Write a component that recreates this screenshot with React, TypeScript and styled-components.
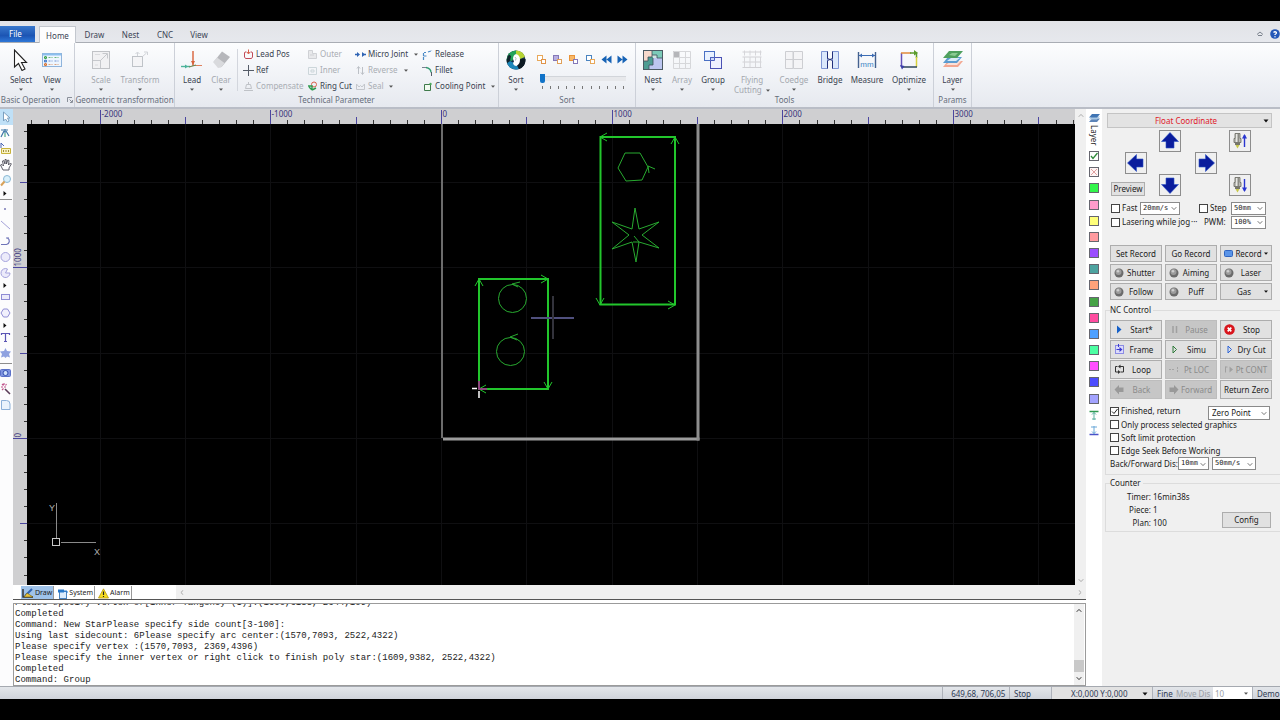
import React from "react";
import styled, { createGlobalStyle, css } from "styled-components";

const UI = `"Noto Sans", "Open Sans", sans-serif`;
const MONO = `"Liberation Mono", "Courier New", monospace`;

const Global = createGlobalStyle`
  * { box-sizing: border-box; }
  html, body, #root { height: 100%; }
  body { margin: 0; background: #000; font: 8px/12px ${UI}; color: #1c1c1c; overflow: hidden; }
  button, input, select { font: inherit; color: inherit; margin: 0; padding: 0; }
  svg { display: block; flex: none; }
`;

/* ---------- shell ---------- */

const Shell = styled.div`
  display: flex;
  flex-direction: column;
  height: 100vh;
  min-height: 600px;
  padding: 21px 0;
`;

const TabBar = styled.nav`
  display: flex;
  align-items: flex-end;
  height: 22px;
  flex: none;
  background: linear-gradient(#e2e3e7, #e6e8ed);
  border-bottom: 1px solid #a9adb4;
`;

const FileButton = styled.button`
  width: 35px;
  height: 16px;
  margin-right: 4px;
  padding-right: 4px;
  border: 0;
  background: linear-gradient(#3a78cc, #1c55b4 60%, #2e78d8);
  color: #fff;
`;

const Tab = styled.button<{ $w: number; $on?: boolean }>`
  width: ${(p) => p.$w}px;
  height: 14px;
  border: 0;
  background: transparent;
  color: #3b4454;
  ${(p) =>
    p.$on &&
    css`
      height: 17px;
      margin-bottom: -1px;
      padding-top: 1px;
      background: #fdfdfe;
      border: 1px solid #c3c7ce;
      border-bottom: 0;
    `}
`;

const TabBarEnd = styled.div`
  display: flex;
  align-items: center;
  gap: 6px;
  height: 17px;
  margin-left: auto;
`;

const Ribbon = styled.div`
  display: flex;
  flex: none;
  height: 66px;
  background: linear-gradient(#fcfdfe, #f1f3f7 50%, #e6e9ef);
  border-bottom: 2px solid #b9bdc6;
`;

const Group = styled.section<{ $w: number }>`
  display: flex;
  flex-direction: column;
  flex: none;
  width: ${(p) => p.$w}px;
  padding-bottom: 1px;
  border-right: 1px solid #ccd0d8;
`;

const GroupBody = styled.div<{ $pad?: number }>`
  display: flex;
  flex: 1;
  min-height: 0;
  padding: 3px 0 0 ${(p) => p.$pad ?? 0}px;
`;

const GroupName = styled.div`
  display: flex;
  flex: none;
  align-items: center;
  justify-content: center;
  gap: 7px;
  height: 12px;
  color: #666e7b;
  white-space: nowrap;
`;

const BigButton = styled.button<{ $w: number }>`
  display: flex;
  flex-direction: column;
  align-items: center;
  justify-content: flex-start;
  flex: none;
  width: ${(p) => p.$w}px;
  height: 48px;
  padding-top: 3px;
  border: 0;
  background: none;
  color: #39424f;
  line-height: 10px;
  white-space: nowrap;
  &:disabled {
    color: #a3a7ae;
  }
  span {
    margin-top: 4px;
  }
`;

const DropGap = styled.i`
  padding-top: 3px;
`;

const Divider = styled.i`
  width: 1px;
  height: 42px;
  margin: 3px 5px 0 1px;
  background: #d3d6dd;
`;

const ToolGrid = styled.div`
  display: grid;
  grid-template-columns: 64px 48px 67px 74px;
  grid-auto-rows: 16px;
`;

const SmallButton = styled.button`
  display: flex;
  align-items: center;
  gap: 2px;
  border: 0;
  background: none;
  color: #39424f;
  white-space: nowrap;
  text-align: left;
  &:disabled {
    color: #a9adb3;
  }
  em {
    padding-left: 4px;
  }
`;

const SortTools = styled.div`
  display: flex;
  flex-direction: column;
  width: 98px;
  padding: 7px 0 0 5px;
`;

const SortIcons = styled.div`
  display: flex;
  justify-content: space-between;
  width: 92px;
  height: 21px;
  button {
    border: 0;
    background: none;
    height: 12px;
  }
`;

const Slider = styled.input`
  appearance: none;
  width: 86px;
  height: 9px;
  margin-left: 4px !important;
  background: linear-gradient(#d2d5da, #d2d5da) 0 2px / 100% 1px no-repeat, linear-gradient(#e7e8eb, #e7e8eb) 0 2px / 100%
    5px no-repeat;
  &::-webkit-slider-thumb {
    appearance: none;
    width: 5px;
    height: 9px;
    background: #1173c8;
    border-radius: 0 0 2px 2px;
  }
`;

const Ticks = styled.div`
  display: flex;
  justify-content: space-between;
  width: 82px;
  margin: 3px 0 0 6px;
  i {
    width: 1px;
    height: 3px;
    background: #777;
  }
`;

/* ---------- work area ---------- */

const Work = styled.div`
  display: flex;
  flex: 1;
  min-height: 0;
  background: #fff;
`;

const Toolbox = styled.div`
  display: flex;
  flex-direction: column;
  flex: none;
  width: 13px;
  background: #fcfcfd;
`;

const Tool = styled.button<{ $on?: boolean }>`
  display: flex;
  align-items: center;
  height: 16px;
  border: 0;
  background: ${(p) => (p.$on ? "#bfe0f7" : "none")};
`;

const More = styled.button`
  display: flex;
  align-items: center;
  height: 8px;
  padding-left: 3px !important;
  border: 0;
  background: none;
`;

const Rule = styled.i`
  height: 1px;
  margin: 2px 1px 1px 0;
  background: #8d8d8d;
`;

const Center = styled.div`
  display: flex;
  flex-direction: column;
  flex: 1;
  min-width: 0;
`;

const Stage = styled.div`
  display: grid;
  grid-template-columns: 14px 1fr 11px;
  grid-template-rows: 15px 1fr;
  flex: 1;
  min-height: 0;
  background: #cfcfd1;
  > svg {
    width: 100%;
    height: 100%;
    min-height: 0;
  }
`;

const StageScroll = styled.div`
  display: flex;
  flex-direction: column;
  justify-content: space-between;
  align-items: center;
  grid-column: 3;
  grid-row: 1 / 3;
  padding: 4px 0 2px;
  background: #f0f0f0;
`;

const SheetTabs = styled.div`
  display: flex;
  flex: none;
  height: 15px;
  border-bottom: 1px solid #555;
  padding-left: 8px;
`;

const SheetTab = styled.button<{ $on?: boolean }>`
  display: flex;
  align-items: center;
  gap: 1px;
  height: 13px;
  margin: 1px 2px 0 0;
  padding: 1px 1px 0 1px;
  border: 0;
  border-right: 1px solid #999;
  background: ${(p) => (p.$on ? "#9fc3ea" : "none")};
  font: 7px/12px ${UI};
`;

const SheetScroll = styled.div`
  display: flex;
  align-items: center;
  justify-content: space-between;
  flex: 1;
  margin-left: 42px;
  padding: 0 3px;
  background: #f0f0f0;
`;

const LogBox = styled.div`
  display: flex;
  flex: none;
  height: 83px;
  margin-top: 3px;
  border: 1px solid #9b9b9b;
  background: #fff;
`;

const LogLines = styled.div`
  display: flex;
  flex-direction: column;
  flex: 1;
  min-width: 0;
  overflow: hidden;
  padding-left: 1px;
  font: 9px/11px ${MONO};
  color: #222;
  white-space: pre;
  > :first-child {
    margin-top: -6px;
  }
`;

const LogScroll = styled.div`
  display: flex;
  flex-direction: column;
  align-items: center;
  justify-content: space-between;
  width: 10px;
  padding: 4px 0;
  margin-right: 1px;
  background: #f0f0f0;
`;

const Thumb = styled.i`
  width: 10px;
  height: 12px;
  margin: auto 0 4px;
  background: #c9c9c9;
`;

const LayerStrip = styled.div`
  display: flex;
  flex-direction: column;
  align-items: center;
  flex: none;
  width: 16px;
  padding-top: 4px;
  background: #fff;
`;

const LayerName = styled.div`
  width: 10px;
  height: 28px;
  padding-top: 2px;
  writing-mode: vertical-rl;
  line-height: 10px;
`;

const Swatches = styled.div`
  display: flex;
  flex-direction: column;
  justify-content: space-between;
  height: 285px;
`;

const Swatch = styled.button<{ $c: string }>`
  display: flex;
  width: 10px;
  height: 10px;
  border: 1px solid #66666f;
  background: ${(p) => p.$c};
`;

/* ---------- control panel ---------- */

const Panel = styled.aside`
  flex: none;
  width: 178px;
  padding: 4px 0 0 3px;
  background: #f0f0f0;
`;

const Pick = styled.span<{ $w: number; $h?: number; $flat?: boolean }>`
  position: relative;
  display: flex;
  flex: none;
  width: ${(p) => p.$w}px;
  height: ${(p) => p.$h ?? 13}px;
  select {
    appearance: none;
    width: 100%;
    height: 100%;
    padding: 0 10px 0 3px;
    border: 1px solid ${(p) => (p.$flat ? "#c4c4c4" : "#8a8a8a")};
    border-radius: 0;
    background: ${(p) => (p.$flat ? "#e3e3e3" : "#fff")};
    line-height: 12px;
  }
  svg {
    position: absolute;
    right: 3px;
    top: 50%;
    margin-top: -2px;
    pointer-events: none;
  }
`;

const MonoPick = styled(Pick)`
  select {
    font: 7px/11px "DejaVu Sans Mono", ${MONO};
    padding-left: 2px;
    padding-right: 0;
  }
`;

const CoordPick = styled(Pick)`
  margin-left: 2px;
  select {
    color: #e0202a;
    text-align: center;
    text-align-last: center;
  }
`;

const Jog = styled.div`
  display: grid;
  grid-template-columns: 14px 22px 12px 22px 14px 22px 12px 22px;
  grid-template-rows: repeat(3, 22px);
  margin: 2px 0 5px 6px;
`;

const JogKey = styled.button<{ $col: number; $row: number }>`
  grid-column: ${(p) => p.$col};
  grid-row: ${(p) => p.$row};
  display: flex;
  align-items: center;
  justify-content: center;
  border: 1px solid #8d8d8d;
  background: #f0f0f0;
`;

const Push = styled.button`
  display: flex;
  align-items: center;
  border: 1px solid #adadad;
  background: #e1e1e1;
  padding: 0 3px;
  color: #222;
  white-space: nowrap;
  span {
    flex: 1;
    text-align: center;
  }
  &:disabled {
    background: #c6c6c6;
    border-color: #bdbdbd;
    color: #8b8b8b;
  }
`;

const Preview = styled(Push)`
  grid-column: 1 / 3;
  grid-row: 3;
  align-self: end;
  width: 34px;
  height: 14px;
  padding: 0;
`;

const Line = styled.div<{ $h?: number; $pad?: number }>`
  display: flex;
  align-items: center;
  height: ${(p) => p.$h ?? 13}px;
  padding-left: ${(p) => p.$pad ?? 0}px;
  white-space: nowrap;
`;

const Cell = styled.div<{ $w?: number }>`
  display: flex;
  align-items: center;
  width: ${(p) => (p.$w ? `${p.$w}px` : "auto")};
`;

const Check = styled.label`
  display: flex;
  align-items: center;
  gap: 2px;
  input {
    appearance: none;
    width: 9px;
    height: 9px;
    border: 1px solid #444;
    background: #fff;
  }
  svg {
    position: absolute;
    margin-left: 1px;
    pointer-events: none;
  }
`;

const KeyGrid = styled.div<{ $row: number; $gap: number }>`
  display: grid;
  grid-template-columns: repeat(3, 52px);
  grid-auto-rows: ${(p) => p.$row}px;
  gap: ${(p) => p.$gap}px 3px;
`;

const Box = styled.fieldset`
  margin: 0;
  padding: 0 0 0 4px;
  border: 1px solid #dcdcdc;
  border-right: 0;
  min-width: 0;
  legend {
    padding: 0 2px 0 0;
    line-height: 12px;
  }
`;

const CounterBody = styled.div`
  display: flex;
  align-items: center;
  height: 42px;
`;

const Counts = styled.dl`
  display: grid;
  grid-template-columns: 41px 69px;
  grid-auto-rows: 13px;
  column-gap: 2px;
  margin: 0;
  dt {
    text-align: right;
  }
  dd {
    margin: 0;
  }
`;

const Gap = styled.div<{ $h: number }>`
  height: ${(p) => p.$h}px;
`;

const Records = styled.div`
  padding: 16px 0 4px 5px;
`;

const ZeroRow = styled.div`
  display: flex;
  align-items: flex-start;
  justify-content: space-between;
  height: 13px;
  padding-right: 10px;
  > :last-child {
    margin-top: 1px;
  }
`;

const Options = styled.div`
  padding: 6px 0 4px;
`;

const Config = styled(Push)`
  align-self: flex-end;
  width: 49px;
  height: 16px;
  margin-bottom: 3px;
`;

const NcKeys = styled.div`
  padding-top: 4px;
`;

/* ---------- status bar ---------- */

const Status = styled.footer`
  display: flex;
  align-items: stretch;
  justify-content: flex-end;
  flex: none;
  height: 13px;
  overflow: hidden;
  border-top: 1px solid #a5a9b0;
  background: linear-gradient(#e3e6ea, #cfd3da);
  white-space: nowrap;
`;

const StatusCell = styled.span<{ $w: number; $dim?: boolean; $box?: string }>`
  display: flex;
  align-items: center;
  width: ${(p) => p.$w}px;
  padding: 1px 0 0 ${(p) => (p.$dim ? 1 : 4)}px;
  color: ${(p) => (p.$dim ? "#9a9ea6" : "#2f3b55")};
  background: ${(p) => p.$box ?? "none"};
  border-left: 1px solid ${(p) => (p.$dim || p.$box === "#fff" ? "transparent" : "#aeb2ba")};
  svg {
    margin: 0 4px 0 auto;
  }
`;

/* ---------- icons ---------- */

const Caret = ({ c = "#555" }: { c?: string }) => (
  <svg width="4" height="3" viewBox="0 0 4 3">
    <path d="M0 0.500h4L2 2.800z" fill={c} />
  </svg>
);
const BlackCaret = () => (
  <svg width="6" height="4" viewBox="0 0 6 4">
    <path d="M0.500 0.500h5L3 3.500z" fill="#111" />
  </svg>
);
const Chevron = ({ turn = 0, c = "#777" }: { turn?: number; c?: string }) => (
  <svg width="6" height="5" viewBox="0 0 6 5">
    <path d="M0.7 1.2 3 3.6 5.3 1.2" fill="none" stroke={c} transform={`rotate(${turn} 3 2.5)`} />
  </svg>
);

const Svg = ({ s = 22, h, children }: { s?: number; h?: number; children: React.ReactNode }) => (
  <svg width={s} height={h ?? s} viewBox={`0 0 ${s} ${h ?? s}`} fill="none">
    {children}
  </svg>
);

const big = {
  select: (
    <Svg>
      <path d="M4.500 1v17l4-3.500 3.500 7 3-1.500-3.500-6.500h5z" fill="#fff" stroke="#222" strokeWidth="1.100" />
    </Svg>
  ),
  view: (
    <Svg>
      <rect x="1.500" y="4.500" width="19" height="13" fill="#eef6ff" stroke="#8fb4dc" />
      <path d="M2 5.500h18" stroke="#8cc0ee" strokeWidth="2" />
      <g strokeWidth="1.200">
        <circle cx="4.500" cy="8.500" r="1" stroke="#35a048" />
        <circle cx="4.500" cy="12" r="1" stroke="#3f77c8" />
        <circle cx="4.500" cy="15.500" r="1" stroke="#d8702d" />
      </g>
      <path d="M7.500 8.500h4M13.500 8.500h4" stroke="#6cb87a" strokeDasharray="2 1" />
      <path d="M7.500 12h4M13.500 12h4" stroke="#6b8fd0" strokeDasharray="2 1" />
      <path d="M7.500 15.500h4M13.500 15.500h4" stroke="#dba27e" strokeDasharray="2 1" />
    </Svg>
  ),
  scale: (
    <Svg>
      <rect x="2.500" y="2.500" width="17" height="17" fill="#f1f1f3" stroke="#c0c2c6" />
      <path d="M3 11.500h7.500v7.500M10 12l7-7M12.500 4.500h5v5" stroke="#c6c8cc" />
      <path d="M5 5.500h5M5 16h3" stroke="#dadbde" />
    </Svg>
  ),
  transform: (
    <Svg>
      <rect x="3.500" y="7.500" width="10" height="10" fill="#f4f4f6" stroke="#bfc3c8" />
      <path d="M8.500 7V3.500M6.500 5l2-2 2 2M13.500 7.500l4-3.500M15 3h3.500v3" stroke="#d0d3d8" />
    </Svg>
  ),
  lead: (
    <Svg>
      <path d="M12 2v15" stroke="#d8613a" strokeWidth="1.400" />
      <path d="M10 12l2 4 2-4z" fill="#d8613a" />
      <path d="M0 17.500h9" stroke="#4cb39a" strokeWidth="1.400" />
      <path d="M4 15.500v4l3-2z" fill="#4cb39a" />
      <path d="M12 16.500h9" stroke="#e0815e" />
      <path d="M8 18l7-2" stroke="#6b8a55" strokeWidth="1.200" />
    </Svg>
  ),
  clear: (
    <Svg>
      <path d="M12 2.500 20 8l-8.500 10-7.500-5.500z" fill="#b6b7bb" />
      <path d="M3 13 7 8.500l7.500 5.500-3.500 4.500-3 .5z" fill="#d9dadd" />
    </Svg>
  ),
  sort: (
    <Svg>
      <circle cx="11" cy="11" r="9.500" fill="#16304a" />
      <path d="M11 1.500A9.500 9.500 0 0 0 1.500 11L7 12 12 3z" fill="#22a35a" />
      <path d="M11 1.500A9.500 9.500 0 0 1 20 8l-5 2-4-5z" fill="#b6d433" />
      <path d="M2 14a9.500 9.500 0 0 0 12 6l-3-5-6-3z" fill="#1d86b8" />
      <path d="M20.500 10a9.500 9.500 0 0 1-6.500 10l-2-5 4-5z" fill="#0d1a22" />
      <path d="M4 5.500A9.500 9.500 0 0 0 2 14l3-2 1-5z" fill="#10242c" />
      <path d="M11 5q4 1 4 5.500T11.500 17q-3 0-3.500-3l1-1.500L8 10q0-4 3-5z" fill="#fff" />
      <path d="M10 8l1 1.500-.5 2" stroke="#7a8f9a" strokeWidth="0.600" />
    </Svg>
  ),
  nest: (
    <Svg>
      <rect x="1.500" y="1.500" width="19" height="19" fill="#cfe6e2" stroke="#4b5a63" />
      <path d="M2 2h8v6H6v4H2z" fill="#f6d9cb" />
      <path d="M10 2h10v7h-5V6h-5z" fill="#7ccab8" />
      <path d="M2 12h4V8h5v8H7v4H2z" fill="#4d9c92" />
      <path d="M11 9h9v11H7v-4h4z" fill="#bcc6f0" />
      <path d="M10 2v6H6v4H2M10 6h5v3h5M11 9v7H7v4" stroke="#3c4c58" strokeWidth="0.800" />
    </Svg>
  ),
  array: (
    <Svg>
      <rect x="2" y="2" width="6" height="6" fill="#b5b6ba" />
      <path d="M2.500 2.500h17v17h-17zM8.500 2.500v17M14.500 2.500v17M2.500 8.500h17M2.500 14.500h17" stroke="#d6d7da" />
    </Svg>
  ),
  group: (
    <Svg>
      <rect x="2.500" y="2.500" width="10" height="9" fill="#e8f1ff" stroke="#4a70c4" />
      <rect x="8.500" y="8.500" width="11" height="11" fill="#eef1ff" stroke="#4a52b4" />
      <path d="M8.500 8.500h4v3h-4z" fill="#cdd9fb" stroke="#4a60bc" />
    </Svg>
  ),
  flying: (
    <Svg>
      <path d="M1.500 3h19M1.500 8h19M1.500 13h19M1.500 18.500h19" stroke="#d0d0d4" />
      <path d="M3.500 1.500v5M9 1.500v5M14.500 1.500v5M19.500 1.500v5M3.500 8v10M9 8v10M14.500 8v10M19.500 8v10" stroke="#d6d6da" />
    </Svg>
  ),
  coedge: (
    <Svg>
      <path d="M2.500 2.500h7.500v17H2.500zM2.500 10.500h8M10.500 2.500h9v8h-9zM10.500 10.500h9v9h-9z" stroke="#cdced2" fill="#f4f4f6" />
    </Svg>
  ),
  bridge: (
    <Svg>
      <path d="M2.500 2.500h6v17h-6zM13.500 2.500h6v17h-6z" fill="#dbe8fb" stroke="#7f96d4" />
      <path d="M8.500 2.500v7l5 2M13.500 2.500v7l-5 2M8.500 12v7.500M13.500 12v7.500" stroke="#22307a" />
    </Svg>
  ),
  measure: (
    <Svg>
      <path d="M2.500 3v16M19.500 3v16" stroke="#44618f" strokeWidth="1.400" />
      <path d="M3 6.500h16" stroke="#3c6cb4" />
      <path d="M3 6.500l3-2v4zM19 6.500l-3-2v4z" fill="#3c6cb4" />
      <text x="11" y="17.500" textAnchor="middle" fontSize="8" fontFamily="Liberation Sans" fill="#3e86c6">
        mm
      </text>
    </Svg>
  ),
  optimize: (
    <Svg>
      <path d="M3.500 4v14" stroke="#6450b8" strokeWidth="1.500" />
      <path d="M3 4h10" stroke="#e08a3a" strokeWidth="1.500" />
      <path d="M12 4h6.500v5" stroke="#5b9c2e" strokeWidth="1.500" />
      <path d="M18.500 8v10" stroke="#d8d23c" strokeWidth="1.500" />
      <path d="M4 18h15" stroke="#2d4358" strokeWidth="1.500" />
      <path d="M16 1l4 3-4 2.500z" fill="#5b9c2e" />
      <path d="M2 16l2 4.500L6.500 17z" fill="#3b3fa8" />
    </Svg>
  ),
  layer: (
    <Svg>
      <path d="M6 12h15l-5 6H1z" fill="#f2a791" />
      <path d="M4 16l5-4h10l-4 4z" fill="#fbe0d8" />
      <path d="M6 8h14l-5 6H1z" fill="#5c9cd0" />
      <path d="M5 12l4-3h9l-4 3z" fill="#d9ecf8" />
      <path d="M7 2h14l-6 7H1z" fill="#4fa05e" />
      <path d="M7 6l3-2h6l-3 3z" fill="#8ccb93" />
    </Svg>
  ),
};

const S = ({ children }: { children: React.ReactNode }) => <Svg s={11}>{children}</Svg>;
const small = {
  leadPos: <S><path d="M3.500 3h-1.500l-.5 1v4l1 1.500h6l1-1.500V4l-.5-1H7.500" stroke="#c04a58" /><path d="M5.500 0.500v4M4 3l1.500 2L7 3" stroke="#d8604a" /></S>,
  ref: <S><path d="M5.500 0v11M0 5.500h11" stroke="#555c68" /></S>,
  comp: <S><path d="M1 9.500h9M2.500 7.500l1-4h4l1 4zM5.500 1v2" stroke="#bfc2c7" /></S>,
  outer: <S><path d="M1.500 1.500h4v3h4v5h-8zM3 6h4" stroke="#cfd1d5" fill="#e8e9eb" /></S>,
  inner: <S><path d="M1.500 2.500h8v7h-8zM4 5h3v2H4z" stroke="#ccd6da" /></S>,
  ring: <S><circle cx="7" cy="3.500" r="2.500" stroke="#d8604a" /><path d="M1 5h4v4M5 9l-3-3M5 9l4-2" stroke="#2f9a50" strokeWidth="1.400" /></S>,
  micro: <S><path d="M0 5.500h3M8 5.500h3" stroke="#2f64b4" strokeWidth="1.600" /><path d="M2 3l3 2.500L2 8zM7 3l3 2.500L7 8z" fill="#2f64b4" /></S>,
  reverse: <S><path d="M3.500 9V2M2 3.500 3.500 1.500 5 3.500M7.500 2v7M6 7.500 7.500 9.500 9 7.500" stroke="#bcc0c6" /></S>,
  seal: <S><path d="M1.500 3v5.500h8V3L7 6 5.500 4.500 4 6z" stroke="#c4c7cc" /></S>,
  release: <S><path d="M1.500 11V3.500H4M1.500 7h3M6 3l4-1.500" stroke="#4b8ac6" strokeWidth="1.200" strokeDasharray="3 1" /></S>,
  fillet: <S><path d="M0 2.500h4" stroke="#7a8290" /><path d="M4 2.500q5 1 5 5" stroke="#2f9a70" strokeWidth="1.300" /><path d="M9.500 7v4" stroke="#555c68" /></S>,
  cooling: <S><path d="M2.500 3.500h6v6h-6z" stroke="#3f7a4a" fill="#f1faf0" /><circle cx="8.500" cy="3" r="1.200" fill="#4aa85a" /></S>,
};

const Pair = ({ a, b, fa = "#fff", fb = "#fff" }: { a: string; b: string; fa?: string; fb?: string }) => (
  <Svg s={11}>
    <rect x="1.500" y="1.500" width="5" height="5" fill={fa} stroke={a} />
    <rect x="5.500" y="5.500" width="4" height="4" fill={fb} stroke={b} />
  </Svg>
);
const Skip = ({ back }: { back?: boolean }) => (
  <Svg s={11}>
    <path d={back ? "M5.500 1.500v8L0.500 5.500zM10.500 1.500v8L5.500 5.500z" : "M0.500 1.500v8l5-4zM5.500 1.500v8l5-4z"} fill="#1763b5" />
  </Svg>
);

const T = ({ children }: { children: React.ReactNode }) => <Svg s={12} h={14}>{children}</Svg>;
const tool = {
  pick: <T><path d="M3.500 2v9l2-2 2 3 1.500-1-1.500-3h2.500z" fill="#fff" stroke="#7ba0c0" /></T>,
  node: <T><path d="M1 4h7M5 3v4M4 5L1 11M6 5l3 5" stroke="#3f78a8" strokeWidth="1.200" /><path d="M5 7v4" stroke="#2f9a70" /></T>,
  size: <T><path d="M1 1l3 3M1 1v5" stroke="#4b64b4" /><path d="M1.500 6.500h9v5h-9z" stroke="#c8b23c" fill="#fbf4c4" /><path d="M3.500 8v2M6 8v2M8.500 8v2" stroke="#9a8a3a" /></T>,
  hand: <T><path d="M3 12 0.500 7l1.500-.5L3.500 8 2.500 3l1.200-.5L5 6V1.500h1.200L6.500 6l1.300-4 1.200.5L8.500 7l2-2 .8 1L9 10v2z" fill="#fff" stroke="#4d4d58" strokeWidth="0.900" /></T>,
  zoom: <T><circle cx="7" cy="5" r="3.500" fill="#d9f0fb" stroke="#8ab8d4" /><path d="M4.500 7.500L1 11.500" stroke="#d8a25a" strokeWidth="2" /></T>,
  dot: <T><rect x="4" y="6" width="2" height="2" fill="#9a9ac8" /></T>,
  line: <T><path d="M1 3l9 8" stroke="#a4a2d8" /></T>,
  arc: <T><path d="M1 10.500h5.500a3.500 3.500 0 0 0 1-6.500" stroke="#6f74b8" strokeWidth="1.200" /><path d="M6 4h3" stroke="#6f74b8" /></T>,
  circle: <T><circle cx="5.500" cy="7" r="4.500" stroke="#a4a2dc" fill="#ecebfa" /></T>,
  pie: <T><path d="M5.500 7h4.500A4.500 4.500 0 1 1 7.500 3z" stroke="#a4a2dc" fill="#ecebfa" /></T>,
  rect: <T><rect x="1.500" y="4.500" width="8" height="5" stroke="#8f8cd4" fill="#ecebfa" /></T>,
  poly: <T><path d="M3.500 3h4l2.500 4-2.500 4h-4L1 7z" stroke="#8f8cd4" fill="#f1f0fc" /></T>,
  text: <T><path d="M1.500 5V3.500h8V5M5.500 3.500v7.500M4 11.500h3" stroke="#5a55b4" strokeWidth="1.200" /></T>,
  star: <T><path d="M5.500 2 7 5l4 .5L9 8l1 3.500-3-1-1.500 1.500-1.500-1.500-3 1L2 8 0 5.500 4 5z" fill="#8fa2e0" /></T>,
  cam: <T><rect x="0.500" y="3.500" width="10" height="7" rx="1" fill="#7f94e0" stroke="#5a70c8" /><circle cx="5.500" cy="7" r="2.500" fill="#cfe0fb" stroke="#3450b0" /></T>,
  wand: <T><path d="M5 7l5 5" stroke="#5a3c58" strokeWidth="1.600" /><path d="M4 1v2M1 5h2M2 2l1.500 1.500M6.500 2L5.500 3.500M2 8l1.500-1.500M4 5h2" stroke="#c0508a" strokeWidth="1.100" /></T>,
  sheet: <T><path d="M1.500 2.500h5a3.500 3.500 0 0 1 3.500 3.500v5.500H1.500z" fill="#eaf3fc" stroke="#8cb0d8" /></T>,
};

const JogArrow = ({ turn }: { turn: number }) => (
  <Svg s={18}>
    <path d="M9 0.500 17.500 9.500H13v6.500H5V9.500H0.500z" fill="#0a1c9c" stroke="#2c55c8" strokeWidth="0.600" transform={`rotate(${turn} 9 9)`} />
  </Svg>
);
const HeadIcon = ({ down }: { down?: boolean }) => (
  <Svg s={16}>
    <path d="M3 0.500h5v5h1v4H2v-4h1z" fill="#b9b9b4" stroke="#66665e" strokeWidth="0.800" />
    <path d="M4.500 1v8" stroke="#e8e8e4" />
    <path d="M6.500 1v8" stroke="#8a8a84" />
    <path d="M3 9.500h5v2.500H3z" fill="#77776c" />
    <path d="M3.500 12h4L5.500 15.500z" fill="#c8c84a" />
    <path d="M12.500 2v12" stroke="#2a36d0" strokeWidth="1.400" />
    <path d={down ? "M10 10.500h5L12.500 15z" : "M10 5.500h5L12.500 1z"} fill="#2a36d0" />
  </Svg>
);
const Lamp = () => (
  <Svg s={10}>
    <circle cx="5" cy="5" r="4.500" fill="#6b6b6b" />
    <circle cx="4.500" cy="4" r="3" fill="#9c9c9c" />
    <circle cx="4" cy="3.300" r="1.300" fill="#cfcfcf" />
  </Svg>
);
const K = ({ children }: { children: React.ReactNode }) => <Svg s={11}>{children}</Svg>;
const key = {
  start: <K><path d="M3 1.500v8l4.500-4z" fill="#1560c8" /></K>,
  pause: <K><path d="M4 2v7M7.500 2v7" stroke="#a0a0a0" strokeWidth="1.500" /></K>,
  stop: <K><circle cx="5.500" cy="5.500" r="5.300" fill="#d8141c" /><path d="M3.700 3.700l3.600 3.600M7.300 3.700L3.700 7.300" stroke="#fff" strokeWidth="1.700" /></K>,
  frame: <K><rect x="1.500" y="1.500" width="8" height="8" stroke="#8c8ce4" fill="#dcdcfa" /><path d="M2.500 5h3v-2l3 2.500-3 2.500v-2h-3z" fill="#3a3ad0" /><path d="M4.500 0v3" stroke="#3a3ad0" /></K>,
  simu: <K><path d="M4 2v7l3.500-3.500z" stroke="#2f7a3a" /></K>,
  dry: <K><path d="M4 2v7l3.500-3.500z" stroke="#2a62d8" /></K>,
  loop: <K><path d="M3.500 2.500h-2v5.500H4M6.500 8h3V2.500H6" stroke="#333" /><path d="M6.500 0.500L4 2.500l2.500 2zM4 6l2.500 2L4 10z" fill="#333" /></K>,
  loc: <K><path d="M0 5.500h6M8.500 3v5.500" stroke="#a4a4a4" strokeDasharray="2 1" /></K>,
  cont: <K><path d="M1.500 2.500v6M1.500 3h2" stroke="#a0a0a0" /><path d="M5.500 2.500v6L9 5.500z" fill="#a0a0a0" /></K>,
  back: <K><path d="M5 1v2.500h4.500v4.500H5v2.500L0.500 5.500z" fill="#999" /></K>,
  fwd: <K><path d="M5 1v2.500H0.500v4.500H5v2.500L9.500 5.500z" fill="#999" /></K>,
};

/* ---------- rulers and drawing ---------- */

const STEP = 17.07;
const MAJOR = "#4b46a0";

const TopRuler = () => {
  const marks = Array.from({ length: 72 }, (_, i) => i - 24);
  return (
    <svg>
      {marks.map((n) => {
        const x = Math.round(415 + n * STEP) - 0.5;
        const major = n % 10 === 0;
        const mid = !major && n % 5 === 0;
        return (
          <g key={n}>
            <path d={`M${x} ${major ? 1 : mid ? 8 : 11}V15`} stroke={major || mid ? MAJOR : "#333"} />
            {major && (
              <text x={x + 1} y="8" fontSize="8" fontFamily="Noto Sans" fill="#38347c">
                {n * 100}
              </text>
            )}
          </g>
        );
      })}
    </svg>
  );
};

const SideRuler = () => {
  const marks = Array.from({ length: 30 }, (_, i) => i - 9);
  return (
    <svg>
      {marks.map((n) => {
        const y = Math.round(314 - n * STEP) + 0.5;
        const major = n % 10 === 0;
        const mid = !major && n % 5 === 0;
        return (
          <g key={n}>
            <path d={`M${major ? 0 : mid ? 7 : 11} ${y}H14`} stroke={major || mid ? MAJOR : "#333"} />
            {major && (
              <text transform={`translate(8 ${y - 1}) rotate(-90)`} fontSize="8" fontFamily="Noto Sans" fill="#38347c">
                {n * 100}
              </text>
            )}
          </g>
        );
      })}
    </svg>
  );
};

const head = (x: number, y: number, turn: number) => (
  <path key={`${x} ${y}`} d="M7 -4L0 0L7 4" transform={`translate(${x} ${y}) rotate(${turn})`} strokeWidth="1" />
);

const Drawing = () => (
  <svg>
    <rect width="100%" height="100%" fill="#000" />
    <g stroke="#0f0f11">
      {Array.from({ length: 13 }, (_, i) => Math.round(415 + (i - 4) * STEP * 5) - 0.5).map((x) => (
        <line key={x} x1={x} x2={x} y1="0" y2="100%" />
      ))}
      {Array.from({ length: 6 }, (_, i) => Math.round(314 + (i - 3) * STEP * 5) + 0.5).map((y) => (
        <line key={y} y1={y} y2={y} x1="0" x2="100%" />
      ))}
    </g>
    <g transform="translate(415 314)" fill="none">
      <path d="M0 -314V0" stroke="#6c6c6c" strokeWidth="2" />
      <path d="M1 1H257.500" stroke="#9c9c9c" strokeWidth="3" />
      <path d="M256 -314V2.500" stroke="#8e8e8e" strokeWidth="3" />
      <g stroke="#22c62c" strokeWidth="2">
        <path d="M158.500 -301H233V-133.500H158.500Z" />
        <rect x="37" y="-159" width="69" height="110" />
        {head(158, -301, 0)}
        {head(233, -301, 90)}
        {head(233, -133, 180)}
        {head(158, -133, 270)}
        {head(37, -159, 90)}
        {head(106, -159, 180)}
        {head(106, -49, 270)}
        {head(37, -49, 0)}
      </g>
      <g stroke="#28aa30" strokeWidth="1">
        <circle cx="70.500" cy="-139.500" r="14" />
        <circle cx="68.500" cy="-86.500" r="14" />
        <path d="M78 -156L70 -154L76 -151M76 -104L68 -101L75 -98" />
        <path d="M176 -270L183 -285H198L206 -271L200 -258L184 -257Z" />
        <path d="M213 -269L206 -272L207 -265" />
        <path d="M193 -230L197 -209L217 -216L200 -203L217 -190L197 -196L194 -176L190 -196L170 -189L187 -203L170 -216L190 -209Z" />
        <path d="M192 -202L197 -196H191" />
      </g>
      <path d="M89 -120H132" stroke="#50507e" strokeWidth="2" />
      <path d="M111 -142V-99" stroke="#33333c" strokeWidth="2" />
      <path d="M30 -49.500H35M37 -47V-40" stroke="#fff" strokeWidth="1.500" />
      <path d="M37 -57V-49H45" stroke="#b02098" strokeWidth="1.500" />
    </g>
    <g stroke="#8a8a8a" fill="none">
      <path d="M29.500 379V414M34 418.500H69" />
      <rect x="25.500" y="414.500" width="7" height="7" stroke="#c8c8c8" />
    </g>
    <g fontFamily="Liberation Sans" fontSize="9" fill="#b4b4b4" textAnchor="middle">
      <text x="25" y="387">Y</text>
      <text x="70" y="431">X</text>
    </g>
  </svg>
);

/* ---------- parts ---------- */

const Big = ({ w, icon, label, off, drop = true, two }: { w: number; icon: React.ReactNode; label: string; off?: boolean; drop?: boolean; two?: string }) => (
  <BigButton $w={w} disabled={off}>
    {icon}
    <span>{label}</span>
    {two && (
      <Cell>
        {two}&nbsp;&nbsp;
        <Caret />
      </Cell>
    )}
    {!two && drop && (
      <DropGap>
        <Caret />
      </DropGap>
    )}
  </BigButton>
);

const Small = ({ icon, label, off, drop }: { icon: React.ReactNode; label: string; off?: boolean; drop?: boolean }) => (
  <SmallButton disabled={off}>
    {icon}
    {label}
    {drop && (
      <em>
        <Caret />
      </em>
    )}
  </SmallButton>
);

const Tick = ({ label, on }: { label: string; on?: boolean }) => (
  <Check>
    <input type="checkbox" defaultChecked={on} />
    {on && (
      <svg width="7" height="7" viewBox="0 0 7 7">
        <path d="M1 3.500l2 2 3.500-4.500" fill="none" stroke="#222" />
      </svg>
    )}
    {label}
  </Check>
);

const Drop = ({ w, v, name }: { w: number; v: string; name: string }) => (
  <MonoPick $w={w}>
    <select aria-label={name}>
      <option>{v}</option>
    </select>
    <Chevron />
  </MonoPick>
);

const layerColors = [
  "#33f54c", "#ff9bcb", "#ffff7a", "#ff9ba0", "#9b4dff", "#4da3a0", "#ffa27a",
  "#46a346", "#ff4da0", "#4da0ff", "#4dffa3", "#ff4dff", "#4d4dff", "#a3a3ff",
];

const logLines = [
  "Please specify vertex or[inner Tangency (I)]:(1600,6155, 2644,109)",
  "Completed",
  "Command: New StarPlease specify side count[3-100]:",
  "Using last sidecount: 6Please specify arc center:(1570,7093, 2522,4322)",
  "Please specify vertex :(1570,7093, 2369,4396)",
  "Please specify the inner vertex or right click to finish poly star:(1609,9382, 2522,4322)",
  "Completed",
  "Command: Group",
];

const Key = ({ icon, label, off, after }: { icon?: React.ReactNode; label: string; off?: boolean; after?: React.ReactNode }) => (
  <Push disabled={off}>
    {icon}
    <span>{label}</span>
    {after}
  </Push>
);

const RibbonArea = () => (
  <Ribbon>
    <Group $w={75}>
      <GroupBody $pad={5}>
        <Big w={32} icon={big.select} label="Select" />
        <Big w={30} icon={big.view} label="View" />
      </GroupBody>
      <GroupName>
        Basic Operation
        <svg width="6" height="6" viewBox="0 0 6 6">
          <path d="M0.500 5V0.500H5M2.500 2.500L5 5M5.500 3v2.500H3" fill="none" stroke="#8a909a" />
        </svg>
      </GroupName>
    </Group>
    <Group $w={100}>
      <GroupBody $pad={8}>
        <Big w={36} icon={big.scale} label="Scale" off />
        <Big w={42} icon={big.transform} label="Transform" off />
      </GroupBody>
      <GroupName>Geometric transformation</GroupName>
    </Group>
    <Group $w={324}>
      <GroupBody $pad={3}>
        <Big w={28} icon={big.lead} label="Lead" />
        <Big w={30} icon={big.clear} label="Clear" off />
        <Divider />
        <ToolGrid>
          <Small icon={small.leadPos} label="Lead Pos" />
          <Small icon={small.outer} label="Outer" off />
          <Small icon={small.micro} label="Micro Joint" drop />
          <Small icon={small.release} label="Release" />
          <Small icon={small.ref} label="Ref" />
          <Small icon={small.inner} label="Inner" off />
          <Small icon={small.reverse} label="Reverse" off drop />
          <Small icon={small.fillet} label="Fillet" />
          <Small icon={small.comp} label="Compensate" off />
          <Small icon={small.ring} label="Ring Cut" />
          <Small icon={small.seal} label="Seal" off drop />
          <Small icon={small.cooling} label="Cooling Point" drop />
        </ToolGrid>
      </GroupBody>
      <GroupName>Technical Parameter</GroupName>
    </Group>
    <Group $w={137}>
      <GroupBody $pad={2}>
        <Big w={30} icon={big.sort} label="Sort" />
        <SortTools>
          <SortIcons>
            <button aria-label="First"><Pair a="#e8a85a" b="#e0944a" /></button>
            <button aria-label="Up"><Pair a="#8478b8" b="#e0a05a" fa="#b8aee0" /></button>
            <button aria-label="Down"><Pair a="#e8943a" b="#8478b8" fa="#f8b86a" /></button>
            <button aria-label="Last"><Pair a="#4a84c0" b="#e8a85a" /></button>
            <button aria-label="Previous"><Skip back /></button>
            <button aria-label="Next"><Skip /></button>
          </SortIcons>
          <Slider type="range" min={0} max={10} defaultValue={0} aria-label="Sort position" />
          <Ticks>
            {Array.from({ length: 11 }, (_, i) => (
              <i key={i} />
            ))}
          </Ticks>
        </SortTools>
      </GroupBody>
      <GroupName>Sort</GroupName>
    </Group>
    <Group $w={298}>
      <GroupBody $pad={2}>
        <Big w={30} icon={big.nest} label="Nest" />
        <Big w={28} icon={big.array} label="Array" off />
        <Big w={34} icon={big.group} label="Group" />
        <Big w={44} icon={big.flying} label="Flying" two="Cutting" off />
        <Big w={40} icon={big.coedge} label="Coedge" off />
        <Big w={32} icon={big.bridge} label="Bridge" drop={false} />
        <Big w={42} icon={big.measure} label="Measure" drop={false} />
        <Big w={42} icon={big.optimize} label="Optimize" />
      </GroupBody>
      <GroupName>Tools</GroupName>
    </Group>
    <Group $w={38}>
      <GroupBody>
        <Big w={37} icon={big.layer} label="Layer" />
      </GroupBody>
      <GroupName>Params</GroupName>
    </Group>
  </Ribbon>
);

const ToolArea = () => {
  const more = (
    <More aria-label="More">
      <svg width="4" height="5" viewBox="0 0 4 5">
        <path d="M0.500 0v5L3.500 2.500z" fill="#111" />
      </svg>
    </More>
  );
  return (
    <Toolbox>
      <Tool $on aria-label="Select">{tool.pick}</Tool>
      <Tool aria-label="Node edit">{tool.node}</Tool>
      <Tool aria-label="Size">{tool.size}</Tool>
      <Tool aria-label="Pan">{tool.hand}</Tool>
      <Tool aria-label="Zoom">{tool.zoom}</Tool>
      {more}
      <Rule />
      <Tool aria-label="Point">{tool.dot}</Tool>
      <Tool aria-label="Line">{tool.line}</Tool>
      <Tool aria-label="Polyline">{tool.arc}</Tool>
      <Tool aria-label="Circle">{tool.circle}</Tool>
      <Tool aria-label="Arc">{tool.pie}</Tool>
      {more}
      <Tool aria-label="Rectangle">{tool.rect}</Tool>
      <Tool aria-label="Polygon">{tool.poly}</Tool>
      {more}
      <Tool aria-label="Text">{tool.text}</Tool>
      <Tool aria-label="Star">{tool.star}</Tool>
      <Rule />
      <Tool aria-label="Camera">{tool.cam}</Tool>
      <Tool aria-label="Wand">{tool.wand}</Tool>
      <Tool aria-label="Sheet">{tool.sheet}</Tool>
    </Toolbox>
  );
};

const LayerArea = () => (
  <LayerStrip>
    <Svg s={12} h={10}>
      <path d="M4 5.500h8l-3 3.500H1z" fill="#5c84b8" />
      <path d="M4 3.500h8l-3 3H1z" fill="#a9c8e4" />
      <path d="M4 1h8L9 4.500H1z" fill="#3f74b4" />
    </Svg>
    <LayerName>Layer</LayerName>
    <Swatches>
      <Swatch $c="#fff" aria-label="Show all">
        <svg width="8" height="8" viewBox="0 0 8 8"><path d="M1 4l2 2.500L7.500 1" fill="none" stroke="#2f8a3a" strokeWidth="1.300" /></svg>
      </Swatch>
      <Swatch $c="#fdf4f4" aria-label="Hide all">
        <svg width="8" height="8" viewBox="0 0 8 8"><path d="M1 1l6 6M7 1L1 7" stroke="#e0a0a0" /></svg>
      </Swatch>
      {layerColors.map((c) => (
        <Swatch key={c} $c={c} aria-label={`Layer ${c}`} />
      ))}
      <Svg s={10}><path d="M0.500 1.500h9" stroke="#2f9a50" strokeWidth="1.500" /><path d="M5 2v8M3 4.500L5 2.500l2 2M3 9h4" stroke="#5ab0a0" /></Svg>
      <Svg s={10}><path d="M0.500 8.500h9" stroke="#4a52c8" strokeWidth="1.500" /><path d="M5 0v8M3 5.500L5 7.500l2-2M2 1h6" stroke="#6aa8d8" /></Svg>
    </Swatches>
  </LayerStrip>
);

const ControlPanel = () => (
  <Panel>
    <CoordPick $w={165} $h={15} $flat>
      <select aria-label="Coordinate system">
        <option>Float Coordinate</option>
      </select>
      <BlackCaret />
    </CoordPick>
    <Jog>
      <JogKey $col={4} $row={1} aria-label="Jog up"><JogArrow turn={0} /></JogKey>
      <JogKey $col={8} $row={1} aria-label="Head up"><HeadIcon /></JogKey>
      <JogKey $col={2} $row={2} aria-label="Jog left"><JogArrow turn={270} /></JogKey>
      <JogKey $col={6} $row={2} aria-label="Jog right"><JogArrow turn={90} /></JogKey>
      <Preview><span>Preview</span></Preview>
      <JogKey $col={4} $row={3} aria-label="Jog down"><JogArrow turn={180} /></JogKey>
      <JogKey $col={8} $row={3} aria-label="Head down"><HeadIcon down /></JogKey>
    </Jog>
    <Line $pad={6} $h={14}>
      <Cell $w={29}><Tick label="Fast" /></Cell>
      <Cell $w={59}><Drop w={40} v="20mm/s" name="Fast speed" /></Cell>
      <Cell $w={32}><Tick label="Step" /></Cell>
      <Drop w={35} v="50mm" name="Step length" />
    </Line>
    <Line $pad={6} $h={14}>
      <Cell $w={80}><Tick label="Lasering while jog" /></Cell>
      <Cell $w={13}>···</Cell>
      <Cell $w={27}>PWM:</Cell>
      <Drop w={35} v="100%" name="PWM" />
    </Line>
    <Records>
      <KeyGrid $row={17} $gap={2}>
        <Key label="Set Record" />
        <Key label="Go Record" />
        <Key icon={<Svg s={9} h={7}><rect x="0.500" y="0.500" width="8" height="6" rx="1" fill="#5a94e8" stroke="#2f64c0" /></Svg>} label="Record" after={<Caret c="#111" />} />
        <Key icon={<Lamp />} label="Shutter" />
        <Key icon={<Lamp />} label="Aiming" />
        <Key icon={<Lamp />} label="Laser" />
        <Key icon={<Lamp />} label="Follow" />
        <Key icon={<Lamp />} label="Puff" />
        <Key label="Gas" after={<Caret c="#111" />} />
      </KeyGrid>
    </Records>
    <Box>
      <legend>NC Control</legend>
      <NcKeys>
        <KeyGrid $row={19} $gap={1}>
          <Key icon={key.start} label="Start*" />
          <Key icon={key.pause} label="Pause" off />
          <Key icon={key.stop} label="Stop" />
          <Key icon={key.frame} label="Frame" />
          <Key icon={key.simu} label="Simu" />
          <Key icon={key.dry} label="Dry Cut" />
          <Key icon={key.loop} label="Loop" />
          <Key icon={key.loc} label="Pt LOC" off />
          <Key icon={key.cont} label="Pt CONT" off />
          <Key icon={key.back} label="Back" off />
          <Key icon={key.fwd} label="Forward" off />
          <Key label="Return Zero" />
        </KeyGrid>
      </NcKeys>
      <Options>
        <ZeroRow>
          <Tick label="Finished, return" on />
          <Pick $w={62} $h={14}>
            <select aria-label="Return point">
              <option>Zero Point</option>
            </select>
            <Chevron />
          </Pick>
        </ZeroRow>
        <Line><Tick label="Only process selected graphics" /></Line>
        <Line><Tick label="Soft limit protection" /></Line>
        <Line><Tick label="Edge Seek Before Working" /></Line>
        <Line>
          <Cell $w={68}>Back/Forward Dis:</Cell>
          <Cell $w={34}><Drop w={31} v="10mm" name="Back distance" /></Cell>
          <Drop w={44} v="50mm/s" name="Back speed" />
        </Line>
      </Options>
    </Box>
    <Gap $h={2} />
    <Box>
      <legend>Counter</legend>
      <CounterBody>
        <Counts>
          <dt>Timer:</dt>
          <dd>16min38s</dd>
          <dt>Piece:</dt>
          <dd>1</dd>
          <dt>Plan:</dt>
          <dd>100</dd>
        </Counts>
        <Config><span>Config</span></Config>
      </CounterBody>
    </Box>
  </Panel>
);

export default function App() {
  return (
    <Shell>
      <Global />
      <TabBar>
        <FileButton>File</FileButton>
        <Tab $w={37} $on>Home</Tab>
        <Tab $w={37}>Draw</Tab>
        <Tab $w={35}>Nest</Tab>
        <Tab $w={34}>CNC</Tab>
        <Tab $w={34}>View</Tab>
        <TabBarEnd>
          <Svg s={8} h={6}><path d="M1 3.500L4 1l3 2.500M2 4.500h4" stroke="#7a818c" /></Svg>
          <Svg s={10}>
            <circle cx="5" cy="5" r="4.800" fill="#2458b8" />
            <path d="M3.500 3.500q1.500-1.500 3 0 .3 1-1.500 2v.5" stroke="#fff" strokeWidth="1.200" />
            <circle cx="5" cy="7.800" r="0.700" fill="#fff" />
          </Svg>
        </TabBarEnd>
      </TabBar>
      <RibbonArea />
      <Work>
        <ToolArea />
        <Center>
          <Stage>
            <i />
            <TopRuler />
            <SideRuler />
            <Drawing />
            <StageScroll>
              <Chevron turn={180} c="#aaa" />
              <Chevron c="#aaa" />
            </StageScroll>
          </Stage>
          <SheetTabs>
            <SheetTab $on>
              <Svg s={12} h={11}>
                <path d="M1 1v8h10" stroke="#333" strokeWidth="1.500" />
                <path d="M3 8l7-7" stroke="#2f64b4" strokeWidth="2" />
                <path d="M2 9l3-4 6 4z" fill="#e8c23a" stroke="#6b5a1a" strokeWidth="0.600" />
              </Svg>
              Draw
            </SheetTab>
            <SheetTab>
              <Svg s={11}>
                <rect x="2.500" y="3.500" width="7" height="7" fill="#dcecfb" stroke="#4a84c0" />
                <path d="M1 1.500h6v3H1z" fill="#2878c8" />
                <path d="M7 3h3v2" stroke="#2878c8" />
              </Svg>
              System
            </SheetTab>
            <SheetTab>
              <Svg s={11}>
                <path d="M5.500 0.800L10.500 10H0.500z" fill="#f8de22" stroke="#b89a10" strokeWidth="0.800" />
                <path d="M5.500 3.500v3.500M5.500 8v1" stroke="#222" strokeWidth="1.200" />
              </Svg>
              Alarm
            </SheetTab>
            <SheetScroll>
              <Chevron turn={90} c="#aaa" />
              <Chevron turn={270} c="#aaa" />
            </SheetScroll>
          </SheetTabs>
          <LogBox>
            <LogLines>
              {logLines.map((l, i) => (
                <div key={i}>{l}</div>
              ))}
            </LogLines>
            <LogScroll>
              <Chevron turn={180} c="#333" />
              <Thumb />
              <Chevron c="#333" />
            </LogScroll>
          </LogBox>
        </Center>
        <LayerArea />
        <ControlPanel />
      </Work>
      <Status>
        <StatusCell $w={67}>&nbsp; 649,68, 706,05</StatusCell>
        <StatusCell $w={42}>Stop</StatusCell>
        <StatusCell $w={101} $box="#e2e2e2">
          <Cell $w={15} />
          X:0,000 Y:0,000
          <BlackCaret />
        </StatusCell>
        <StatusCell $w={22}>Fine</StatusCell>
        <StatusCell $w={39} $dim>Move Dis</StatusCell>
        <StatusCell $w={39} $dim $box="#fff">
          10
          <Caret />
        </StatusCell>
        <StatusCell $w={28}>Demo</StatusCell>
      </Status>
    </Shell>
  );
}
